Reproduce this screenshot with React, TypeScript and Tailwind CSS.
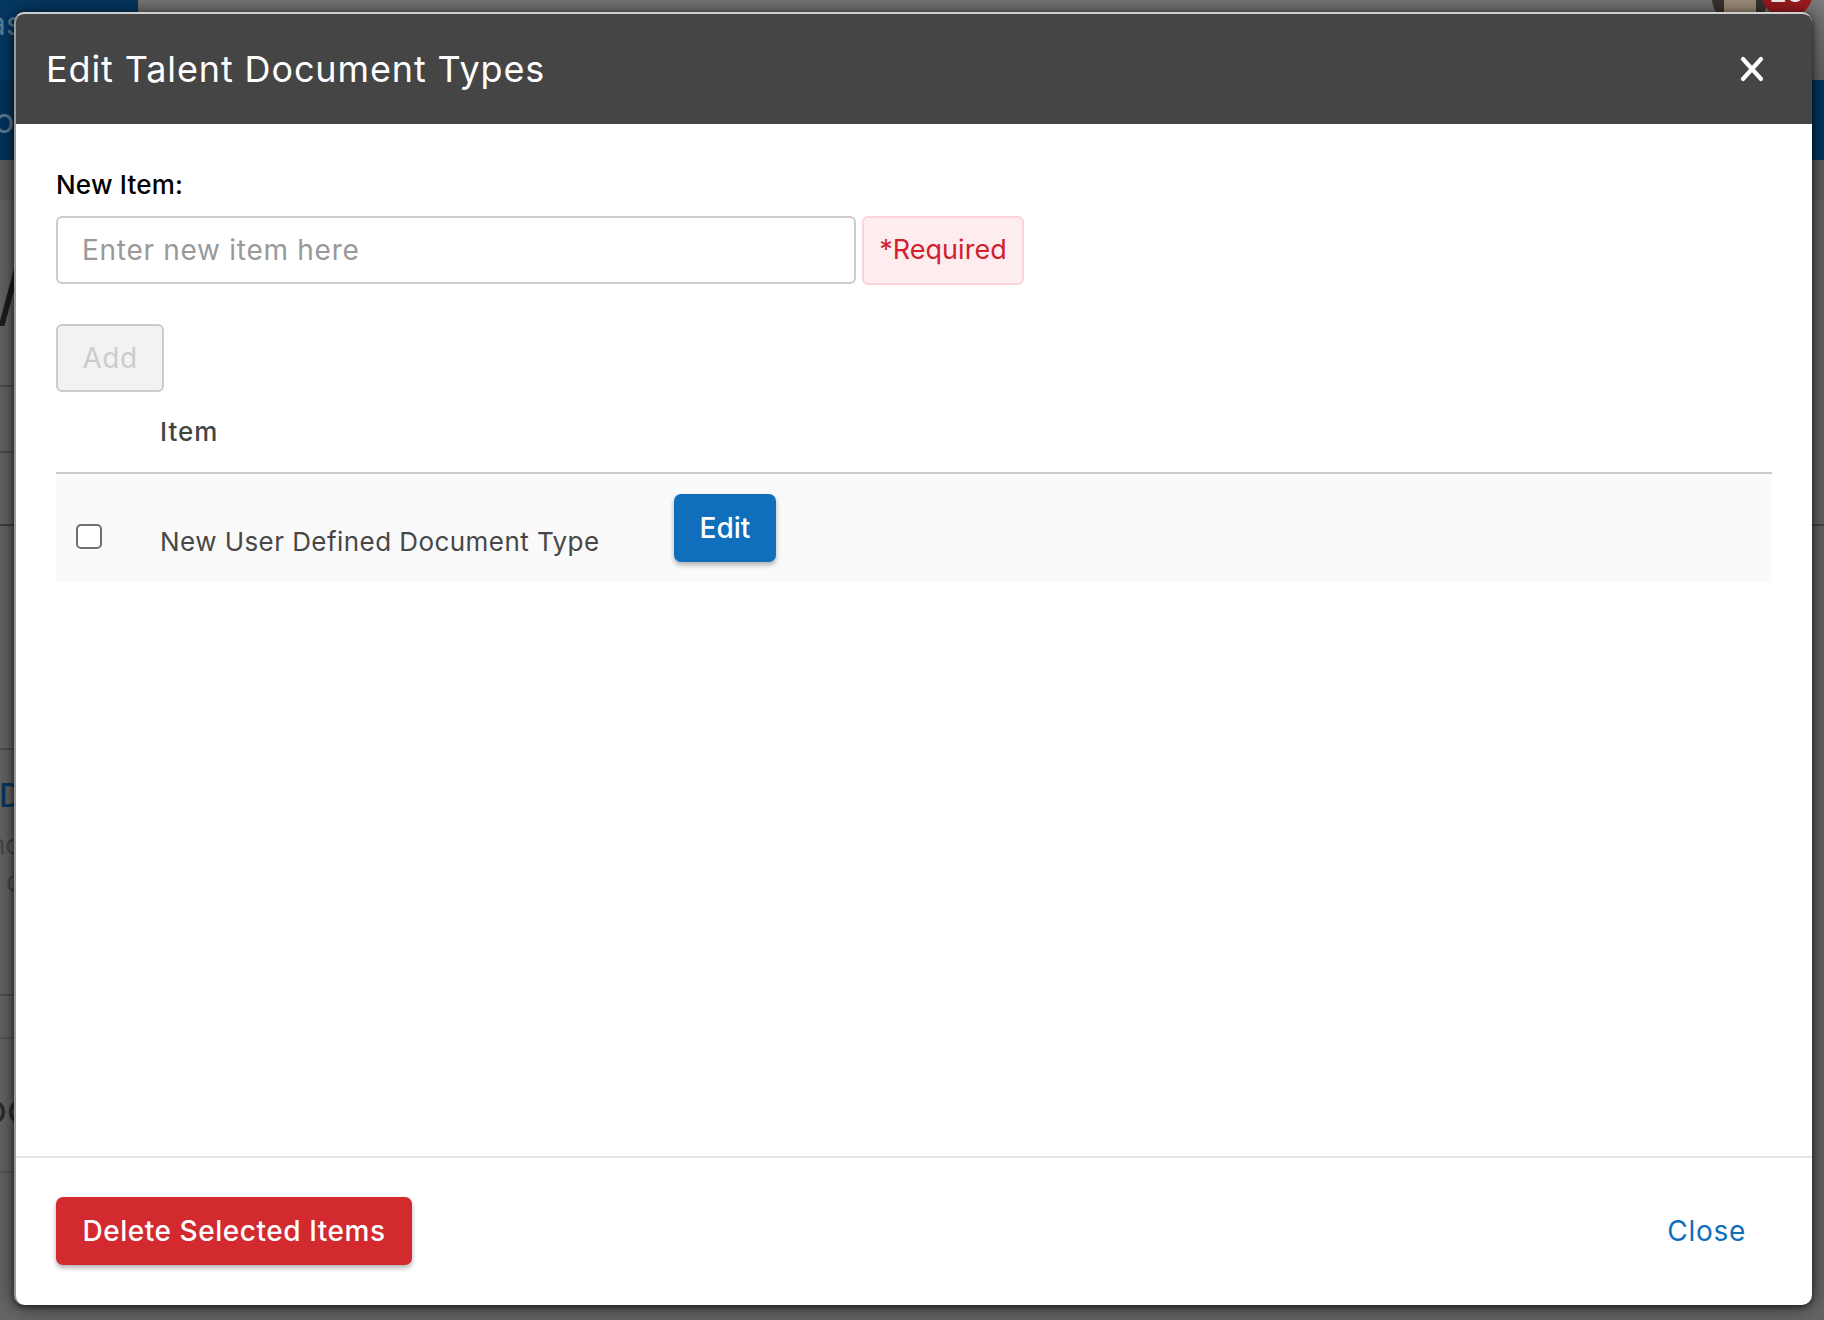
export default function App() {
  return (
    <div className="relative h-[1320px] w-[1824px] overflow-hidden bg-[#666666] font-['Inter',sans-serif]">
      {/* dimmed page behind the dialog */}
      <div className="flex h-[80px]">
        <div className="w-[138px] overflow-hidden bg-[#053a66] pt-[8px] text-[32px] leading-none whitespace-nowrap text-[#5d7f9c]">
          <span className="-ml-[12px] block">as</span>
        </div>
        <div className="relative flex-1 bg-gradient-to-b from-[#7c7c7c] to-[#666666]">
          <div className="absolute top-[-30px] right-[56px] flex h-[56px] w-[56px] items-center justify-center rounded-full bg-[#3a3632]">
            <div className="mt-[12px] h-[46px] w-[32px] rounded-full bg-[#a8957f]"></div>
          </div>
          <div className="absolute top-[-34px] right-[11px] flex h-[52px] w-[52px] items-center justify-center rounded-full bg-[#a41c21] text-[26px] font-bold text-white">20</div>
        </div>
      </div>
      <div className="h-[80px] overflow-hidden bg-[#02365f] pt-[24px] text-[34px] leading-none text-[#5d7f9c]">
        <span className="-ml-[6px] block">o</span>
      </div>
      <div className="h-[40px] border-b border-[#5f5f5f] bg-[#606060]"></div>
      <div className="h-[185px] w-[16px] overflow-hidden pt-[56px] text-[72px] leading-none font-normal text-[#1d1d1d]">
        <span className="-ml-[3px] block">/</span>
      </div>
      <div className="h-[66px] w-[16px] border-t-2 border-[#4f4f4f]"></div>
      <div className="h-[73px] w-[16px] border-t-2 border-[#4f4f4f]"></div>
      <div className="h-[224px] w-[16px] border-t-2 border-[#3f3f3f]"></div>
      <div className="h-[246px] w-[16px] overflow-hidden border-t-2 border-[#505050] pt-[30px] leading-none whitespace-nowrap">
        <span className="-ml-[1px] block text-[32px] font-medium text-[#063a63]">D</span>
        <span className="-ml-[10px] mt-[20px] block text-[26px] text-[#484848]">nc</span>
        <span className="ml-[6px] mt-[8px] block text-[30px] text-[#484848]">c</span>
      </div>
      <div className="h-[43px] w-[16px] border-t-2 border-[#505050]"></div>
      <div className="h-[134px] w-[16px] overflow-hidden border-t-2 border-[#585858] pt-[50px] text-[40px] leading-none whitespace-nowrap text-[#2c2c2c]">
        <span className="-ml-[17px] block">oc</span>
      </div>
      <div className="w-[16px] border-t-2 border-[#585858]"></div>
      <div className="absolute top-[524px] right-0 h-[2px] w-[12px] bg-[#454545]"></div>

      {/* dialog */}
      <div className="absolute top-[12px] left-[14px] flex h-[1293px] w-[1798px] flex-col overflow-hidden rounded-[10px] border-t-2 border-l-2 border-t-[#cfcfcf] border-l-[#9a9a9a] bg-white shadow-[0_0_26px_rgba(0,0,0,0.55),0_2px_6px_rgba(0,0,0,0.6)]">
        <div className="flex h-[110px] shrink-0 items-center justify-between bg-[#454545] pr-[46px] pl-[30px]">
          <h1 className="text-[36px] font-normal tracking-[0.88px] text-white">Edit Talent Document Types</h1>
          <svg width="28" height="28" viewBox="0 0 28 28" fill="none" stroke="white" strokeWidth="4.2" strokeLinecap="round">
            <path d="M5 4 L23 24 M23 4 L5 24" />
          </svg>
        </div>

        <div className="flex flex-1 flex-col px-[40px] pt-[44px]">
          <label className="h-[48px] text-[26px] leading-[34px] font-medium tracking-[0.2px] text-black">New Item:</label>
          <div className="flex gap-[6px]">
            <input
              placeholder="Enter new item here"
              className="h-[68px] w-[800px] rounded-[6px] border-2 border-[#cccccc] px-[24px] text-[28px] tracking-[0.72px] outline-none placeholder:text-[#999999]"
            />
            <div className="flex h-[69px] w-[162px] items-center justify-center rounded-[6px] border-2 border-[#fbd3d8] bg-[#fdedef] text-[27px] tracking-[0.05px] text-[#d3202c]">*Required</div>
          </div>
          <button className="mt-[39px] h-[68px] w-[108px] rounded-[6px] border-2 border-[#cccccc] bg-[#f2f2f2] text-[28px] tracking-[0.5px] text-[#cccccc]">Add</button>
          <div className="flex h-[82px] items-center border-b-2 border-[#cccccc] pb-[2px] pl-[104px] text-[26px] font-medium tracking-[1px] text-[#444444]">Item</div>
          <div className="flex h-[108px] items-start bg-[#fafafa]">
            <input type="checkbox" className="mt-[50px] ml-[20px] h-[25px] w-[26px] appearance-none rounded-[5px] border-2 border-[#707070] bg-white" />
            <span className="mt-[50px] ml-[58px] w-[514px] text-[26px] leading-[36px] tracking-[0.44px] text-[#474747]">New User Defined Document Type</span>
            <button className="mt-[20px] h-[68px] w-[102px] rounded-[7px] bg-[#0f6fbd] text-[28px] font-medium text-white shadow-[0_3px_5px_rgba(0,0,0,0.3)]">Edit</button>
          </div>
        </div>

        <div className="flex h-[149px] shrink-0 items-center justify-between border-t-2 border-[#e5e5e5] pr-[66px] pb-[1px] pl-[40px]">
          <button className="h-[68px] w-[356px] rounded-[7px] bg-[#d32a2f] text-[28px] font-medium tracking-[0.55px] text-white shadow-[0_3px_5px_rgba(0,0,0,0.3)]">Delete Selected Items</button>
          <a className="text-[28px] tracking-[0.7px] text-[#0f6fbd]">Close</a>
        </div>
      </div>
    </div>
  );
}
